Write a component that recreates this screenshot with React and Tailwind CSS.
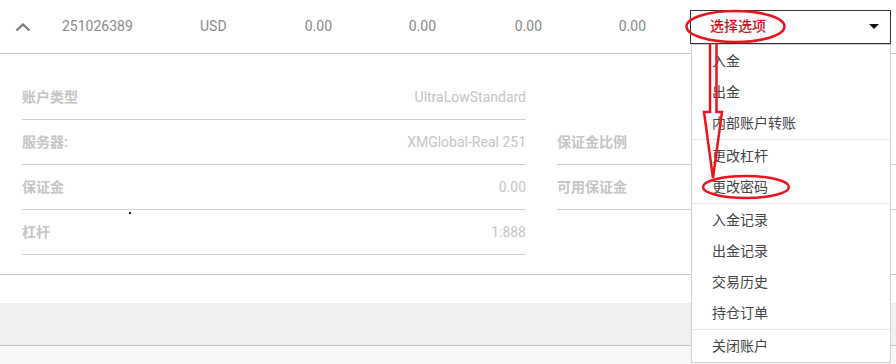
const cjk = { fontFamily: 'Roboto, "Noto Sans CJK SC", sans-serif' }

const leftRows = [
  { label: '账户类型', value: 'UltraLowStandard' },
  { label: '服务器:', value: 'XMGlobal-Real 251' },
  { label: '保证金', value: '0.00' },
  { label: '杠杆', value: '1:888' },
]

const rightRows = ['保证金比例', '可用保证金']

const menuGroups = [
  ['入金', '出金', '内部账户转账'],
  ['更改杠杆', '更改密码'],
  ['入金记录', '出金记录', '交易历史', '持仓订单'],
  ['关闭账户'],
]

function Menu() {
  return (
    <div className="absolute left-[691px] top-[44px] w-[200px] border border-[#cfcfcf] bg-white pt-px">
      {menuGroups.map((group, gi) => (
        <div key={gi}>
          {gi > 0 && <div className="h-px bg-[#e6e6e6] mb-px" />}
          {group.map(item => (
            <div key={item} className="h-[31px] flex items-center pl-[20px] text-[14px] text-[#444]">
              {item}
            </div>
          ))}
        </div>
      ))}
    </div>
  )
}

function Marks() {
  return (
    <svg className="absolute left-0 top-0 pointer-events-none" width="896" height="364">
      <g fill="none" stroke="#e8141e" strokeWidth="2.5">
        <ellipse cx="735.5" cy="26.5" rx="49" ry="15.5" />
        <path d="M710 43 V112 H704 L713 178 L722 112 H716.5 V43" strokeLinejoin="miter" />
        <ellipse cx="746" cy="187" rx="43" ry="11" />
      </g>
    </svg>
  )
}

export default function App() {
  return (
    <div className="relative w-[896px] h-[364px] overflow-hidden bg-white" style={cjk}>
      <div className="h-[54px] flex items-center border-b border-[#c4c4c4] text-[14px] text-[#8a8a8a]">
        <div className="w-[62px] pl-[15px] flex items-center">
          <svg width="16" height="10" viewBox="0 0 16 10">
            <polyline points="1.5,8.5 8,2.5 14.5,8.5" fill="none" stroke="#7a7a7a" strokeWidth="2.2" />
          </svg>
        </div>
        <div className="w-[138px]">251026389</div>
        <div className="w-[60px]">USD</div>
        <div className="w-[72px] text-right">0.00</div>
        <div className="w-[104px] text-right">0.00</div>
        <div className="w-[106px] text-right">0.00</div>
        <div className="w-[104px] text-right">0.00</div>
        <div className="ml-[44px] w-[201px] h-[34px] border border-[#333] flex items-center justify-between pl-[19px] pr-[11px]">
          <span className="text-[14px] font-medium text-[#d0101b]">选择选项</span>
          <span className="w-0 h-0 border-l-[5px] border-r-[5px] border-t-[5px] border-l-transparent border-r-transparent border-t-[#111]" />
        </div>
      </div>

      <div className="flex pt-[21px] pb-[19px] border-b border-[#c4c4c4] text-[14px] text-[#c4c4c4]">
        <div className="ml-[22px] w-[504px]">
          {leftRows.map(r => (
            <div key={r.label} className="h-[45px] flex items-center justify-between border-b border-[#d0d0d0]">
              <span className="font-bold">{r.label}</span>
              <span>{r.value}</span>
            </div>
          ))}
        </div>
        <div className="ml-[31px] flex-1">
          <div className="h-[45px]" />
          {rightRows.map(r => (
            <div key={r} className="h-[45px] flex items-center border-b border-[#d0d0d0]">
              <span className="font-bold">{r}</span>
            </div>
          ))}
        </div>
      </div>

      <div className="h-[28px]" />
      <div className="h-[43px] bg-[#efefef] border-b border-[#c4c4c4]" />
      <div className="h-[20px] bg-[#f7f7f7]" />

      <div className="absolute left-[129px] top-[212px] w-[2px] h-[2px] bg-[#222]" />

      <Menu />
      <Marks />
    </div>
  )
}
